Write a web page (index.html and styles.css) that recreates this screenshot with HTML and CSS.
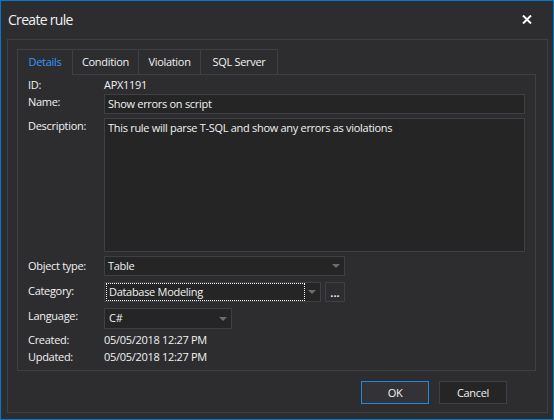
FILE: index.html
```html
<!DOCTYPE html>
<html>
<head>
<meta charset="utf-8">
<link rel="stylesheet" href="styles.css">
</head>
<body>
<div class="window">
  <div class="titlebar">
    <span class="title">Create rule</span>
    <svg class="close" width="10" height="9" viewBox="0 0 10 9"><path d="M1 0.5 L9 8.5 M9 0.5 L1 8.5" stroke="#ffffff" stroke-width="2"/></svg>
  </div>
  <div class="panel">
    <div class="tabs">
      <div class="tab tab-details active">Details</div>
      <div class="tab tab-condition">Condition</div>
      <div class="tab tab-violation">Violation</div>
      <div class="tab tab-sql">SQL Server</div>
    </div>
    <div class="page">
      <div class="row row-id">
        <span class="label">ID:</span>
        <span class="value">APX1191</span>
      </div>
      <div class="row row-name">
        <span class="label">Name:</span>
        <div class="input input-name">Show errors on script</div>
      </div>
      <div class="row row-desc">
        <span class="label">Description:</span>
        <div class="input textarea">This rule will parse T-SQL and show any errors as violations</div>
      </div>
      <div class="row row-object">
        <span class="label">Object type:</span>
        <div class="input select select-object"><span>Table</span><i class="arrow"></i></div>
      </div>
      <div class="row row-category">
        <span class="label">Category:</span>
        <div class="input select select-category"><span class="focus">Database Modeling</span><i class="arrow"></i></div>
        <div class="dots-btn">...</div>
      </div>
      <div class="row row-language">
        <span class="label">Language:</span>
        <div class="input select select-language"><span>C#</span><i class="arrow"></i></div>
      </div>
      <div class="row row-created">
        <span class="label">Created:</span>
        <span class="value">05/05/2018 12:27 PM</span>
      </div>
      <div class="row row-updated">
        <span class="label">Updated:</span>
        <span class="value">05/05/2018 12:27 PM</span>
      </div>
    </div>
    <div class="buttons">
      <div class="btn btn-ok">OK</div>
      <div class="btn btn-cancel">Cancel</div>
    </div>
  </div>
</div>
</body>
</html>
```
FILE: styles.css
```css
* { box-sizing: border-box; }
html, body { margin: 0; padding: 0; background: #2d2d30; }
body {
  font-family: "Open Sans", "Noto Sans", sans-serif;
  font-size: 11px;
  letter-spacing: -0.3px;
  color: #f1f1f1;
}
.window {
  width: 554px;
  height: 420px;
  border: 1px solid #007acc;
  background: #2d2d30;
  display: flex;
  flex-direction: column;
}
.titlebar {
  height: 38px;
  display: flex;
  align-items: center;
  justify-content: space-between;
  padding: 0 21px 1px 7px;
}
.title {
  font-size: 14px;
  color: #f1f1f1;
  letter-spacing: -0.7px;
}
.close { display: block; }
.panel {
  flex: 1;
  margin: 0 5px 6px 6px;
  border: 1px solid #3f3f46;
  padding: 9px 11px 8px 9px;
  display: flex;
  flex-direction: column;
}
.tabs {
  display: flex;
  height: 25px;
  position: relative;
  z-index: 1;
}
.tab {
  height: 25px;
  border: 1px solid #3f3f46;
  border-bottom: none;
  margin-left: -1px;
  display: flex;
  align-items: center;
  justify-content: center;
  line-height: 16px;
  padding-bottom: 1px;
}
.tab:first-child { margin-left: 0; }
.tab-details { width: 56px; }
.tab-condition { width: 67px; }
.tab-violation { width: 63px; }
.tab-sql { width: 78px; }
.tab.active {
  color: #3399ff;
  height: 26px;
  background: #2d2d30;
}
.page {
  height: 297px;
  border: 1px solid #3f3f46;
  padding: 2px 10px 0 10px;
}
.row {
  display: flex;
  align-items: flex-start;
  line-height: 16px;
}
.label { width: 76px; flex: none; }
.row-id { height: 17px; }
.row-name { height: 20px; }
.row-desc { margin-top: 4px; height: 134px; }
.row-object { margin-top: 4px; height: 20px; }
.row-category { margin-top: 6px; height: 20px; }
.row-category .label { padding-top: 1px; }
.row-object .label { padding-top: 2px; }
.row-language { margin-top: 6px; height: 21px; }
.row-created { margin-top: 3px; height: 17px; }
.row-updated { height: 17px; }
.input {
  background: #252526;
  border: 1px solid #3f3f46;
  height: 100%;
  padding: 1px 3px;
  line-height: 16px;
}
.input-name, .textarea { flex: 1; }
.select {
  display: flex;
  align-items: center;
  justify-content: space-between;
  padding: 0 4px 1px 3px;
}
.select-object { width: 241px; }
.select-category { width: 217px; padding-left: 1px; }
.select-language { width: 128px; padding-left: 4px; }
.arrow {
  width: 0;
  height: 0;
  border-top: 4px solid #6d6d70;
  border-left: 4px solid transparent;
  border-right: 4px solid transparent;
  margin-top: 1px;
}
.focus {
  width: 199px;
  height: 18px;
  border: 1px dotted #ffffff;
  padding: 0 2px;
  line-height: 16px;
  margin-top: 1px;
}
.dots-btn {
  margin-left: 4px;
  width: 20px;
  height: 20px;
  border: 1px solid #3f3f46;
  background: #2d2d30;
  text-align: center;
  line-height: 18px;
  padding-top: 1px;
  font-weight: bold;
  letter-spacing: 0;
}
.buttons {
  display: flex;
  justify-content: flex-end;
  gap: 10px;
  margin-top: 10px;
  padding-right: 29px;
}
.btn {
  width: 68px;
  height: 23px;
  display: flex;
  align-items: center;
  justify-content: center;
  padding-bottom: 1px;
}
.btn-ok {
  background: #333337;
  border: 1px solid #1c8ae4;
}
.btn-cancel {
  background: #252526;
  border: 1px solid #3f3f46;
}
```
